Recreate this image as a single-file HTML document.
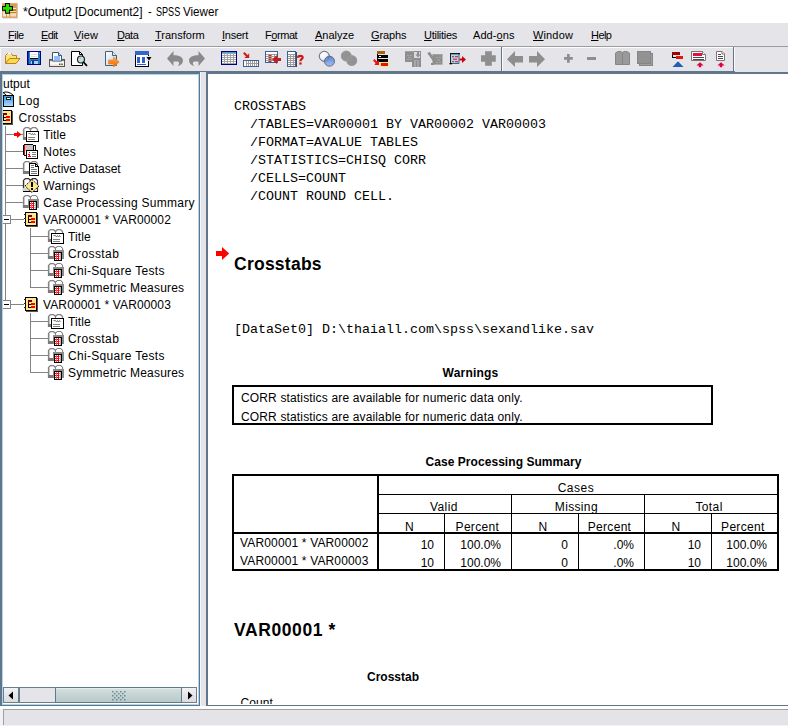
<!DOCTYPE html>
<html>
<head>
<meta charset="utf-8">
<title>*Output2 [Document2] - SPSS Viewer</title>
<style>
html,body{margin:0;padding:0;}
body{width:788px;height:726px;overflow:hidden;position:relative;background:#e4e4e9;font-family:"Liberation Sans",sans-serif;color:#000;}
.abs{position:absolute;}
#titlebar{left:0;top:0;width:788px;height:23px;background:#fff;}
#titletext{left:22px;top:4px;font-size:12px;line-height:16px;white-space:nowrap;}
#menubar{left:0;top:23px;width:788px;height:23px;background:#e4e4e9;}
.mi{position:absolute;top:5px;font-size:11px;line-height:14px;white-space:nowrap;color:#000;}
.mi u{text-decoration:underline;}
#tbline{left:0;top:46px;width:788px;height:1px;background:#9c9c9c;}
#tbline2{left:0;top:47px;width:733px;height:1px;background:#fff;}
#toolbar{left:0;top:48px;width:788px;height:23px;background:#e4e4e9;}
#band{left:0;top:71px;width:788px;height:635px;background:#62768b;}
#leftpane{left:2px;top:74px;width:195px;height:629px;background:#fff;border:1px solid #a9d7ef;overflow:hidden;}
#divider{left:200px;top:72px;width:6px;height:634px;background:#e4e4e9;}
#rightpane{left:208px;top:74px;width:580px;height:631px;background:#fff;overflow:hidden;}
#gap{left:0;top:706px;width:788px;height:3px;background:#fefeff;}
#status{left:0;top:709px;width:788px;height:17px;background:#e3e3e8;}
.tr{position:absolute;left:0;height:17px;line-height:17px;font-size:12px;white-space:nowrap;}
.tl{position:absolute;background:#808080;}
.mono{font-family:"Liberation Mono",monospace;font-size:13.33px;line-height:18px;white-space:pre;position:absolute;}
.h1{position:absolute;font-weight:bold;font-size:17.5px;line-height:20px;white-space:nowrap;}
.tt{position:absolute;font-weight:bold;font-size:12px;line-height:14px;white-space:nowrap;text-align:center;}
.c{position:absolute;font-size:12px;line-height:14px;white-space:nowrap;}
.ln{position:absolute;background:#000;}
svg{position:absolute;overflow:visible;}
</style>
</head>
<body>
<div id="titlebar" class="abs"></div>
<svg style="left:0;top:0" width="22" height="22" viewBox="0 0 22 22">
<rect x="3" y="4" width="15" height="15" fill="#dfe4ec"/>
<rect x="2" y="3" width="15.300" height="15" fill="#d89c5c"/>
<rect x="2.500" y="3.500" width="14.300" height="14" fill="none" stroke="#e0ac70" stroke-width="1"/>
<rect x="3" y="11.500" width="3" height="5" fill="#f8e4d0"/><rect x="7" y="13.500" width="2" height="3" fill="#f8e4d0"/><rect x="10.300" y="13.200" width="5.700" height="3.300" fill="#f4dcc4"/>
<rect x="13" y="8" width="3" height="1" fill="#f8e8d8"/>
<rect x="10" y="9.200" width="6" height="1.600" fill="#b87c24"/>
<rect x="10" y="11" width="6" height="1" fill="#f4e48c"/>
<rect x="10" y="12" width="6" height="1" fill="#b87c24"/>
<path d="M5.100 3.100H9.900V6.100H12.900V10.700H9.900V13.700H5.100V10.700H2.100V6.100H5.100Z" fill="#000"/>
<path d="M6 4H9V7H12V9.800H9V12.800H6V9.800H3V7H6Z" fill="#22e000"/>
</svg>
<div id="titletext" class="abs"><span style="position:absolute;left:0.5px;top:0;display:inline-block;transform-origin:0 0;transform:scaleX(1.034)">*Output2</span> <span style="position:absolute;left:53.0px;top:0;display:inline-block;transform-origin:0 0;transform:scaleX(0.992)">[Document2]</span> <span style="position:absolute;left:126.1px;top:0;display:inline-block;transform-origin:0 0;transform:scaleX(0.900)">-</span> <span style="position:absolute;left:133.5px;top:0;display:inline-block;transform-origin:0 0;transform:scaleX(0.756)">SPSS</span> <span style="position:absolute;left:161.2px;top:0;display:inline-block;transform-origin:0 0;transform:scaleX(0.968)">Viewer</span></div>
<div id="menubar" class="abs">
<span class="mi" style="left:8px;letter-spacing:-0.5px"><u>F</u>ile</span>
<span class="mi" style="left:41px;letter-spacing:-0.6px"><u>E</u>dit</span>
<span class="mi" style="left:74px;letter-spacing:0.1px"><u>V</u>iew</span>
<span class="mi" style="left:117px;letter-spacing:-0.5px"><u>D</u>ata</span>
<span class="mi" style="left:155px"><u>T</u>ransform</span>
<span class="mi" style="left:222px;letter-spacing:-0.25px"><u>I</u>nsert</span>
<span class="mi" style="left:265px;letter-spacing:-0.45px">F<u>o</u>rmat</span>
<span class="mi" style="left:315px"><u>A</u>nalyze</span>
<span class="mi" style="left:371px;letter-spacing:-0.1px"><u>G</u>raphs</span>
<span class="mi" style="left:424px;letter-spacing:-0.27px"><u>U</u>tilities</span>
<span class="mi" style="left:473px;letter-spacing:0.08px">Add-<u>o</u>ns</span>
<span class="mi" style="left:533px;letter-spacing:0.14px"><u>W</u>indow</span>
<span class="mi" style="left:591px;letter-spacing:-0.55px"><u>H</u>elp</span>
</div>
<div id="tbline" class="abs"></div>
<div id="tbline2" class="abs"></div>
<div id="toolbar" class="abs">
<!--TB_START-->
<svg style="left:0;top:0" width="788" height="23" viewBox="0 48 788 23">
<defs>
<linearGradient id="gFold" x1="0" y1="0" x2="0" y2="1"><stop offset="0" stop-color="#f4e894"/><stop offset="1" stop-color="#f0dc40"/></linearGradient>
<linearGradient id="gPr" x1="0" y1="0" x2="0" y2="1"><stop offset="0" stop-color="#c8c4c0"/><stop offset="0.5" stop-color="#ffffff"/><stop offset="1" stop-color="#dcd8d4"/></linearGradient>
<linearGradient id="gExp" x1="0" y1="0" x2="1" y2="1"><stop offset="0" stop-color="#ffffff"/><stop offset="1" stop-color="#b8d0ec"/></linearGradient>
<linearGradient id="gOr" x1="0" y1="0" x2="0" y2="1"><stop offset="0" stop-color="#ffb040"/><stop offset="1" stop-color="#f06010"/></linearGradient>
<radialGradient id="gC1" cx="0.4" cy="0.35" r="0.7"><stop offset="0" stop-color="#ffffff"/><stop offset="1" stop-color="#dde4f4"/></radialGradient>
<linearGradient id="gC2" x1="0" y1="0" x2="0" y2="1"><stop offset="0" stop-color="#5a84dc"/><stop offset="1" stop-color="#a4c0f0"/></linearGradient>
</defs>
<!-- open folder -->
<g>
<path d="M5.5 63.5V55.5L7.5 53.5H11.5L12.5 55.5H16.5V58" fill="url(#gFold)" stroke="#c47a30"/>
<path d="M8 53.5H11" stroke="#fff" stroke-width="1"/>
<path d="M5.5 63.5L9.5 58.5H20L16 63.5Z" fill="#f4e040" stroke="#c47a30"/>
</g>
<!-- save -->
<g shape-rendering="crispEdges">
<rect x="27.5" y="51.5" width="13" height="13" fill="#2c7cc4" stroke="#000088"/>
<rect x="28" y="52" width="1" height="12" fill="#1040a0"/>
<rect x="30" y="52" width="8" height="6" fill="#fff"/>
<rect x="31" y="54" width="6" height="1" fill="#dcdcdc"/><rect x="31" y="56" width="6" height="1" fill="#dcdcdc"/>
<rect x="30" y="58" width="8" height="1" fill="#000"/>
<rect x="31" y="61" width="7" height="3" fill="#a8d0f4"/>
<rect x="31" y="60" width="7" height="1" fill="#104898"/>
<rect x="32" y="61" width="2" height="3" fill="#0c3c90"/>
<rect x="39" y="53" width="1" height="1" fill="#80b8e8"/>
</g>
<!-- print -->
<g>
<rect x="49.5" y="59.5" width="15" height="7" fill="url(#gPr)" stroke="#5c5250"/>
<rect x="50" y="60" width="14" height="1" fill="#8c8480"/>
<rect x="59" y="63.5" width="1.5" height="1.5" fill="#f01010"/><rect x="61" y="63.5" width="2" height="1.5" fill="#30b030"/>
<path d="M52.5 61V52.5H58.5L61.5 55.5V61Z" fill="#fff" stroke="#2c5c7c"/>
<path d="M58.5 52.5V55.5H61.5" fill="#c8dce8" stroke="#2c5c7c"/>
<rect x="54" y="56.5" width="6" height="1" fill="#3070ff"/><rect x="54" y="58.5" width="6" height="1" fill="#3070ff"/>
</g>
<!-- preview -->
<g>
<path d="M71.500 51.500H79.500L82.500 54.500V65.500H71.500Z" fill="#fff" stroke="#000"/>
<path d="M79.500 51.500V54.500H82.500" fill="none" stroke="#000"/>
<circle cx="81" cy="59.500" r="3.500" fill="#d4dcdc" stroke="#202020" stroke-width="1.200"/>
<rect x="79.500" y="57.500" width="1.500" height="1.500" fill="#30e8e8"/><rect x="81.500" y="60.500" width="1.200" height="1.200" fill="#30e8e8"/>
<path d="M83.800 62.500L86.500 65.300" stroke="#000" stroke-width="1.800" stroke-linecap="round"/>
</g>
<!-- export -->
<g>
<path d="M105.500 51.500H112.500L116.500 55.500V65.500H105.500Z" fill="url(#gExp)" stroke="#3c6478"/>
<path d="M112.500 51.500V55.500H116.500" fill="#e8f0f8" stroke="#3c6478"/>
<path d="M108.500 60H113.500V57L119.200 62L113.500 67V64H108.500Z" fill="url(#gOr)" stroke="#f08020" stroke-width="0.600"/>
</g>
<!-- dialog recall -->
<g shape-rendering="crispEdges">
<rect x="135.500" y="54.500" width="13" height="12" fill="#fff" stroke="#000"/>
<rect x="135" y="51" width="14" height="4" fill="#3464d0"/>
<rect x="137" y="57" width="3" height="6" fill="#3060d8"/><rect x="142" y="57" width="3" height="6" fill="#3060d8"/>
<rect x="137" y="64" width="9" height="1" fill="#3060d8"/>
<rect x="146" y="56" width="6" height="5" fill="#e4e4e9"/>
<path d="M146.500 57H151.500L149 60.500Z" fill="#000" shape-rendering="auto"/>
</g>
<!-- undo / redo -->
<path d="M167 58.500L173.500 51V55.200C179 55.200 183 57 183 60.500C183 63.500 181 65.200 177.800 66C179.600 64.200 179.600 62 177.500 61.600H173.500V66Z" fill="#8a8a8a"/>
<path d="M205 58.500L198.500 51V55.200C193 55.200 189 57 189 60.500C189 63.500 191 65.200 194.200 66C192.400 64.200 192.400 62 194.500 61.600H198.500V66Z" fill="#8a8a8a"/>
<!-- data grid -->
<g shape-rendering="crispEdges">
<rect x="221.500" y="51.500" width="15" height="13" fill="#a4a4a4" stroke="#000080"/>
<rect x="222" y="52" width="14" height="1" fill="#3ca0e4"/>
<g fill="#fff">
<rect x="222" y="54" width="2" height="1"/><rect x="225" y="54" width="2" height="1"/><rect x="228" y="54" width="2" height="1"/><rect x="231" y="54" width="2" height="1"/><rect x="234" y="54" width="2" height="1"/>
<rect x="222" y="56" width="2" height="1"/><rect x="225" y="56" width="2" height="1"/><rect x="228" y="56" width="2" height="1"/><rect x="231" y="56" width="2" height="1"/><rect x="234" y="56" width="2" height="1"/>
<rect x="222" y="58" width="2" height="1"/><rect x="225" y="58" width="2" height="1"/><rect x="228" y="58" width="2" height="1"/><rect x="231" y="58" width="2" height="1"/><rect x="234" y="58" width="2" height="1"/>
<rect x="222" y="60" width="2" height="1"/><rect x="225" y="60" width="2" height="1"/><rect x="228" y="60" width="2" height="1"/><rect x="231" y="60" width="2" height="1"/><rect x="234" y="60" width="2" height="1"/>
<rect x="222" y="62" width="2" height="1"/><rect x="225" y="62" width="2" height="1"/><rect x="228" y="62" width="2" height="1"/><rect x="231" y="62" width="2" height="1"/><rect x="234" y="62" width="2" height="1"/>
</g>
</g>
<!-- goto case -->
<g>
<path d="M249.200 58V53.300L247.600 54.900L244.600 52L243 53.600L246 56.500L244.300 58Z" fill="#d02020"/>
<g shape-rendering="crispEdges">
<rect x="243.500" y="60.500" width="15" height="6" fill="#a09c9c" stroke="#3a6294"/>
<rect x="244" y="61" width="2" height="5" fill="#fff"/>
<g fill="#fff">
<rect x="247" y="61" width="1" height="2"/><rect x="249" y="61" width="1" height="2"/><rect x="251" y="61" width="1" height="2"/><rect x="253" y="61" width="1" height="2"/><rect x="255" y="61" width="1" height="2"/><rect x="257" y="61" width="1" height="2"/>
<rect x="247" y="64" width="1" height="2"/><rect x="249" y="64" width="1" height="2"/><rect x="251" y="64" width="1" height="2"/><rect x="253" y="64" width="1" height="2"/><rect x="255" y="64" width="1" height="2"/><rect x="257" y="64" width="1" height="2"/>
</g>
</g>
</g>
<!-- insert variable -->
<g>
<g shape-rendering="crispEdges">
<rect x="265.500" y="51.500" width="12" height="11" fill="#a09c9c" stroke="#3a6294"/>
<rect x="266" y="52" width="11" height="2" fill="#fff"/>
<g fill="#fff">
<rect x="266" y="55" width="2" height="1"/><rect x="272" y="55" width="2" height="1"/><rect x="275" y="55" width="2" height="1"/>
<rect x="266" y="57" width="2" height="1"/><rect x="272" y="57" width="2" height="1"/><rect x="275" y="57" width="2" height="1"/>
<rect x="266" y="59" width="2" height="1"/><rect x="272" y="59" width="2" height="1"/><rect x="275" y="59" width="2" height="1"/>
<rect x="266" y="61" width="2" height="1"/><rect x="272" y="61" width="2" height="1"/><rect x="275" y="61" width="2" height="1"/>
</g>
<g fill="#d81818">
<rect x="269" y="55" width="2" height="1"/><rect x="269" y="57" width="2" height="1"/><rect x="269" y="59" width="2" height="1"/><rect x="269" y="61" width="2" height="1"/>
</g>
</g>
<path d="M272 59.500L277 55V58H281V61H277V64Z" fill="#d01818"/>
</g>
<!-- variables ? -->
<g>
<g shape-rendering="crispEdges">
<rect x="296" y="52" width="1" height="15" fill="#404850"/>
<rect x="287.500" y="51.500" width="8" height="15" fill="#a09c9c" stroke="#3a6294"/>
<rect x="288" y="52" width="7" height="2" fill="#fff"/>
<g fill="#fff">
<rect x="288" y="55" width="2" height="1"/><rect x="291" y="55" width="2" height="1"/><rect x="294" y="55" width="1" height="1"/>
<rect x="288" y="57" width="2" height="1"/><rect x="291" y="57" width="2" height="1"/><rect x="294" y="57" width="1" height="1"/>
<rect x="288" y="59" width="2" height="1"/><rect x="291" y="59" width="2" height="1"/><rect x="294" y="59" width="1" height="1"/>
<rect x="288" y="61" width="2" height="1"/><rect x="291" y="61" width="2" height="1"/><rect x="294" y="61" width="1" height="1"/>
<rect x="288" y="63" width="2" height="1"/><rect x="291" y="63" width="2" height="1"/><rect x="294" y="63" width="1" height="1"/>
<rect x="288" y="65" width="2" height="1"/><rect x="291" y="65" width="2" height="1"/><rect x="294" y="65" width="1" height="1"/>
</g>
</g>
<path d="M298 57.700C298 55.200 302.700 55.200 302.700 57.500C302.700 59.200 300.400 59.200 300.400 61.200" fill="none" stroke="#d01818" stroke-width="2.200"/>
<rect x="299.300" y="62.400" width="2.300" height="2.200" fill="#d01818"/>
</g>
<!-- circles -->
<circle cx="324.300" cy="56.300" r="5" fill="url(#gC1)" stroke="#7c8088" stroke-width="0.900"/>
<circle cx="329.500" cy="61.200" r="5" fill="url(#gC2)" stroke="#5c6470" stroke-width="0.900"/>
<circle cx="324.300" cy="56.300" r="5" fill="none" stroke="#6c7480" stroke-width="0.800"/>
<circle cx="346.300" cy="56" r="5.300" fill="#929292"/>
<circle cx="351.800" cy="60.600" r="5.300" fill="#929292"/>
<circle cx="346.300" cy="56" r="5" fill="none" stroke="#9e9e9e" stroke-width="0.700"/>
<circle cx="351.800" cy="60.600" r="5" fill="none" stroke="#9e9e9e" stroke-width="0.700"/>
<!-- designate window -->
<g shape-rendering="crispEdges">
<rect x="377" y="51" width="8" height="3" fill="#a4640c"/>
<rect x="377" y="54" width="1" height="8" fill="#000"/>
<rect x="378" y="55" width="10" height="3" fill="#000"/>
<rect x="379" y="56" width="2" height="1" fill="#fff"/>
<rect x="378" y="59" width="10" height="3" fill="#000"/>
<rect x="380" y="62" width="9" height="5" fill="#ffe870"/>
<rect x="381" y="63" width="7" height="3" fill="#e81010"/>
<path d="M373 60.500L374.500 59L377 61.500L379 60.500V65H374.500L375.500 63Z" fill="#f01010" shape-rendering="auto"/>
</g>
<!-- gray icon 1 -->
<g shape-rendering="crispEdges">
<rect x="405" y="51" width="9" height="11" fill="#8e8e8e"/>
<rect x="405" y="51" width="9" height="1" fill="#a2a2a2"/>
<rect x="407" y="55" width="2" height="1" fill="#a8a8a8"/><rect x="410" y="55" width="2" height="1" fill="#a8a8a8"/>
<rect x="408" y="57" width="3" height="1" fill="#a8a8a8"/>
<rect x="407" y="59" width="2" height="1" fill="#a8a8a8"/><rect x="410" y="59" width="2" height="1" fill="#a8a8a8"/>
<rect x="414" y="51" width="7" height="1" fill="#8e8e8e"/><rect x="420" y="51" width="1" height="8" fill="#8e8e8e"/>
<rect x="414" y="52" width="6" height="6" fill="#dcdce0"/>
<rect x="417" y="52" width="2" height="3" fill="#8e8e8e"/>
<path d="M415.500 54.500H420.500L418 57.500Z" fill="#8e8e8e" shape-rendering="auto"/>
<rect x="412" y="58" width="9" height="9" fill="#8e8e8e"/>
<rect x="414" y="61" width="2" height="6" fill="#a6a6a6"/><rect x="417" y="61" width="2" height="6" fill="#a6a6a6"/>
<rect x="414" y="60" width="5" height="1" fill="#a6a6a6"/>
</g>
<!-- gray icon 2 -->
<g>
<path d="M428.500 52.500L433.800 60" stroke="#8e8e8e" stroke-width="2.800" fill="none"/>
<rect x="432.500" y="54" width="10" height="10.600" fill="#8e8e8e"/>
<rect x="432.500" y="54" width="10" height="1" fill="#a2a2a2"/>
<rect x="431" y="63" width="3" height="2" fill="#8e8e8e"/>
<rect x="436" y="57" width="2" height="1" fill="#a8a8a8"/><rect x="439" y="57" width="2" height="1" fill="#a8a8a8"/>
<rect x="437" y="59.500" width="3" height="1" fill="#a8a8a8"/>
<rect x="436" y="62" width="2" height="1" fill="#a8a8a8"/><rect x="439" y="62" width="2" height="1" fill="#a8a8a8"/>
</g>
<!-- script run -->
<g>
<path d="M450.500 53.500H459V63.500H450.500Z" fill="#a8d8f0" stroke="#48607c" stroke-width="1"/>
<rect x="450" y="53" width="1" height="11" fill="#182430"/>
<rect x="450" y="53" width="10" height="1.300" fill="#101820"/>
<rect x="449.500" y="63" width="2.500" height="1.300" fill="#000"/>
<rect x="452" y="56.200" width="2" height="1" fill="#e01020"/><rect x="455" y="56.200" width="3" height="1" fill="#e01020"/>
<rect x="453" y="58.700" width="4" height="1" fill="#e01020"/>
<rect x="452" y="61.200" width="2" height="1" fill="#e01020"/><rect x="455" y="61.200" width="3" height="1" fill="#e01020"/>
<path d="M459.500 58.500H462V56L466 59.500L462 63V60.500H459.500Z" fill="#d00010"/>
</g>
<!-- plus gray -->
<path d="M485.100 51.300H491.800V55.300H495.800V61.800H491.800V65.800H485.100V61.800H481V55.300H485.100Z" fill="#8e8e8e"/>
<!-- separator -->
<rect x="501" y="47" width="1" height="24" fill="#62768b"/><rect x="502" y="47" width="1" height="24" fill="#fcfcfe"/>
<!-- nav arrows -->
<path d="M507 59.200L515 51V56H523V62.600H515V67Z" fill="#8e8e8e"/>
<path d="M545 59.200L537 51V56H529V62.600H537V67Z" fill="#8e8e8e"/>
<!-- small plus / minus -->
<path d="M567 54H569.700V57H572.800V59.800H569.700V62.700H567V59.800H564V57H567Z" fill="#8e8e8e"/>
<rect x="587" y="57" width="9" height="3" fill="#8e8e8e"/>
<!-- open book gray -->
<path d="M615.500 64.500V53C617.500 51 621 51 622.500 52.500C624 51 627.500 51 629.500 53V64.500Z" fill="#9a9a9a" stroke="#868686"/>
<path d="M622.500 52.500V64" stroke="#868686" stroke-width="1"/>
<!-- closed book gray -->
<g shape-rendering="crispEdges">
<rect x="639.500" y="53.500" width="13" height="12" fill="#a0a0a0" stroke="#868686"/>
<rect x="637.500" y="51.500" width="13" height="12" fill="#929292" stroke="#868686"/>
</g>
<!-- icon A -->
<g shape-rendering="crispEdges">
<rect x="672" y="52" width="8" height="3" fill="#a00000"/>
<rect x="672" y="55" width="1" height="3" fill="#000"/><rect x="672" y="57" width="4" height="1" fill="#000"/>
<rect x="676" y="56" width="7" height="3" fill="#e41414"/>
<rect x="677" y="60" width="2" height="1" fill="#fff"/>
<path d="M678 61.300L683.500 67H672.500Z" fill="#2060b4" shape-rendering="auto"/>
</g>
<!-- icon B -->
<g>
<path d="M691.500 51.500H702.500L705.500 54.500V60.500H691.500Z" fill="#fff" stroke="#7c7474"/>
<path d="M702.500 51.500V54.500H705.500" fill="#fff" stroke="#7c7474"/>
<rect x="693" y="53" width="9" height="3" fill="#e41040"/>
<rect x="693" y="57" width="11" height="1" fill="#504848"/><rect x="693" y="59" width="11" height="1" fill="#504848"/>
<path d="M700 62.200L703.600 65.400H701.200V67.200H698.800V65.400H696.400Z" fill="#e00040"/>
</g>
<!-- icon C -->
<g>
<path d="M716.500 51.500H722L724.500 54V60.500H716.500Z" fill="#fff" stroke="#7c7474"/>
<path d="M722 51.500V54H724.500" fill="#fff" stroke="#7c7474"/>
<rect x="718" y="54" width="3" height="1" fill="#504848"/><rect x="718" y="56" width="5" height="1" fill="#504848"/><rect x="718" y="58" width="5" height="1" fill="#504848"/>
<path d="M721 62.200L724.600 65.400H722.200V67.200H719.800V65.400H717.400Z" fill="#e00040"/>
</g>
<!-- right separator -->
<rect x="733" y="47" width="1" height="25" fill="#62768b"/><rect x="734" y="47" width="1" height="25" fill="#fcfcfe"/><rect x="735" y="71" width="53" height="1" fill="#e4e4e9"/>
</svg>

<!--TB_END-->
</div>
<div class="abs" style="left:0;top:47px;width:1px;height:24px;background:#f6f6f8"></div>
<div id="band" class="abs"></div>
<div class="abs" style="left:735px;top:71px;width:53px;height:1px;background:#e4e4e9"></div>
<div id="divider" class="abs"></div>
<div id="leftpane" class="abs">
<!--TREE_START-->
<div class="tr" style="left:-9.3px;top:1px;">Output</div>
<svg style="left:-3px;top:17px" width="16" height="16" viewBox="0 0 16 16" shape-rendering="crispEdges"><defs><linearGradient id="lg" x1="0" y1="0" x2="0" y2="1"><stop offset="0" stop-color="#2f97e0"/><stop offset="1" stop-color="#b4defa"/></linearGradient></defs><path d="M2 1Q8 -2 13.5 3.5" fill="none" stroke="#000" shape-rendering="auto"/><path d="M3 0.5L6 3" fill="none" stroke="#000" shape-rendering="auto"/><rect x="3.5" y="3.5" width="10" height="11" fill="url(#lg)" stroke="#000"/><rect x="6.5" y="5.5" width="4" height="2" fill="#fff" stroke="#222"/></svg>
<div class="tr" style="left:15.5px;top:18px;letter-spacing:0.5px;">Log</div>
<svg style="left:-4px;top:35px" width="16" height="16" viewBox="0 0 16 16" shape-rendering="crispEdges"><rect x="2" y="1" width="12" height="14" fill="#555"/><rect x="1.5" y="0.5" width="11" height="13" fill="#ffe88c" stroke="#000"/><rect x="0" y="2" width="2" height="1" fill="#222"/><rect x="0" y="6" width="2" height="1" fill="#222"/><rect x="0" y="10" width="2" height="1" fill="#222"/><rect x="4" y="3" width="4" height="2" fill="#800000"/><rect x="7" y="6" width="4" height="2" fill="#f00"/><rect x="7" y="9" width="4" height="2" fill="#f00"/><path d="M4.5 5V10.5H7M4.5 7.5H7" fill="none" stroke="#000"/></svg>
<div class="tr" style="left:15.5px;top:35px;letter-spacing:0.45px;">Crosstabs</div>
<div class="tl" style="left:2px;top:51px;width:1px;height:179px;background:#848484"></div>
<div class="tl" style="left:2px;top:59px;width:18px;height:1px;background:#848484"></div>
<svg style="left:20px;top:52px" width="16" height="16" viewBox="0 0 16 16" shape-rendering="crispEdges"><path d="M0.5 13V2.5L1.5 1.5L2.5 0.5H5.5L6.5 1.5L7.5 2.5L8.5 1.5L9.5 0.5H12.5L13.5 1.5L14.5 2.5V13" fill="#fff" stroke="#848484" stroke-width="1.25" shape-rendering="auto"/><rect x="7" y="2" width="1" height="3" fill="#848484"/><rect x="1" y="2" width="1" height="8" fill="#c8c8c8"/><rect x="0" y="10" width="6" height="3" fill="#7a7a7a"/><rect x="3.5" y="4.5" width="12" height="10" fill="#fff" stroke="#000"/><rect x="3" y="14" width="13" height="1" fill="#000"/><rect x="15" y="4" width="1" height="11" fill="#000"/><path d="M5.5 6.5H7.5L8.5 8L9.5 6.5L10.5 8L11.5 6.5L12.5 8" fill="none" stroke="#777" shape-rendering="auto"/><rect x="5" y="10" width="7" height="1" fill="#808080"/><rect x="5" y="12" width="7" height="1" fill="#808080"/></svg>
<div class="tr" style="left:40.3px;top:52px;letter-spacing:0.1px;">Title</div>
<div class="tl" style="left:2px;top:76px;width:18px;height:1px;background:#848484"></div>
<svg style="left:20px;top:69px" width="16" height="16" viewBox="0 0 16 16" shape-rendering="crispEdges"><path d="M1.5 0.5H9.5L10.5 1.5H12.5V11.5H1.5L0.5 10.5V1.5Z" fill="#fff" stroke="#000"/><rect x="2" y="1" width="8" height="6" fill="#c9c3c3"/><rect x="1" y="1" width="1" height="10" fill="#f00"/><rect x="10" y="2" width="1" height="5" fill="#000"/><rect x="3.5" y="6.5" width="11" height="8" fill="#fff" stroke="#000"/><rect x="6" y="8" width="1" height="1" fill="#f00"/><rect x="5" y="10" width="2" height="1" fill="#f00"/><rect x="6" y="10" width="1" height="3" fill="#f00"/><rect x="5" y="12" width="3" height="1" fill="#f00"/><rect x="9" y="8" width="4" height="1" fill="#808080"/><rect x="9" y="10" width="4" height="1" fill="#808080"/><rect x="9" y="12" width="4" height="1" fill="#808080"/></svg>
<div class="tr" style="left:40.3px;top:69px;letter-spacing:0.3px;">Notes</div>
<div class="tl" style="left:2px;top:93px;width:18px;height:1px;background:#848484"></div>
<svg style="left:20px;top:86px" width="16" height="16" viewBox="0 0 16 16" shape-rendering="crispEdges"><path d="M0.5 13V2.5L1.5 1.5L2.5 0.5H5.5L6.5 1.5L7.5 2.5L8.5 1.5L9.5 0.5H12.5L13.5 1.5L14.5 2.5V13" fill="#fff" stroke="#848484" stroke-width="1.25" shape-rendering="auto"/><rect x="7" y="2" width="1" height="3" fill="#848484"/><rect x="1" y="2" width="1" height="8" fill="#c8c8c8"/><rect x="0" y="10" width="6" height="3" fill="#7a7a7a"/><path d="M6.5 2.5H12.5L15.5 5.5V14.5H6.5Z" fill="#fff" stroke="#000"/><path d="M12.5 2.5V5.5H15.5" fill="none" stroke="#000"/><rect x="6" y="14" width="10" height="1" fill="#000"/><rect x="8" y="4" width="3" height="1" fill="#707070"/><rect x="8" y="6" width="3" height="1" fill="#707070"/><rect x="8" y="8" width="6" height="1" fill="#707070"/><rect x="8" y="10" width="6" height="1" fill="#707070"/><rect x="8" y="12" width="6" height="1" fill="#707070"/></svg>
<div class="tr" style="left:40.3px;top:86px;">Active Dataset</div>
<div class="tl" style="left:2px;top:110px;width:18px;height:1px;background:#848484"></div>
<svg style="left:20px;top:103px" width="16" height="16" viewBox="0 0 16 16" shape-rendering="crispEdges"><path d="M0.5 13V2.5L1.5 1.5L2.5 0.5H5.5L6.5 1.5L7.5 2.5L8.5 1.5L9.5 0.5H12.5L13.5 1.5L14.5 2.5V13" fill="#fff" stroke="#333" stroke-width="1.25" shape-rendering="auto"/><rect x="7" y="2" width="1" height="3" fill="#333"/><rect x="1" y="2" width="1" height="8" fill="#c8c8c8"/><rect x="0" y="10" width="6" height="3" fill="#d4d4d4"/><rect x="0" y="13" width="15" height="1" fill="#000"/><path d="M9 1.5L16 8L9 14.5L2 8Z" fill="#ffe88c" stroke="#000" stroke-dasharray="1.4 1" shape-rendering="auto"/><rect x="8" y="4" width="2" height="5" fill="#000"/><rect x="8" y="10" width="2" height="2" fill="#000"/></svg>
<div class="tr" style="left:40.3px;top:103px;letter-spacing:0.25px;">Warnings</div>
<div class="tl" style="left:2px;top:127px;width:18px;height:1px;background:#848484"></div>
<svg style="left:20px;top:120px" width="16" height="16" viewBox="0 0 16 16" shape-rendering="crispEdges"><path d="M0.5 13V2.5L1.5 1.5L2.5 0.5H5.5L6.5 1.5L7.5 2.5L8.5 1.5L9.5 0.5H12.5L13.5 1.5L14.5 2.5V13" fill="#fff" stroke="#848484" stroke-width="1.25" shape-rendering="auto"/><rect x="7" y="2" width="1" height="3" fill="#848484"/><rect x="1" y="2" width="1" height="8" fill="#c8c8c8"/><rect x="0" y="10" width="6" height="3" fill="#7a7a7a"/><rect x="5" y="4" width="11" height="9" fill="#8c8c8c"/><path d="M8 2.5L9.5 1H12.5L14 2.5V4H8Z" fill="#fff"/><rect x="6.5" y="6.5" width="7" height="8" fill="#fff" stroke="#000"/><rect x="7" y="8" width="3" height="1" fill="#f00"/><rect x="7" y="10" width="3" height="1" fill="#f00"/><rect x="7" y="12" width="3" height="1" fill="#f00"/><rect x="10" y="7" width="1" height="7" fill="#f00"/><rect x="8" y="7" width="1" height="7" fill="#f55"/><rect x="11" y="8" width="2" height="1" fill="#9ab"/><rect x="11" y="10" width="2" height="1" fill="#9ab"/><rect x="11" y="12" width="2" height="1" fill="#9ab"/><rect x="12" y="7" width="1" height="7" fill="#abc"/></svg>
<div class="tr" style="left:40.3px;top:120px;letter-spacing:0.26px;">Case Processing Summary</div>
<svg style="left:11px;top:56px" width="8" height="7" viewBox="0 0 8 7"><path d="M0 2H3V0L7.5 3.5L3 7V5H0Z" fill="#f00"/></svg>
<div class="abs" style="left:-1px;top:140px;width:7px;height:7px;border:1px solid #848484;background:#fff"></div>
<div class="tl" style="left:1px;top:144px;width:5px;height:1px;background:#000"></div>
<div class="tl" style="left:8px;top:144px;width:13px;height:1px;background:#848484"></div>
<svg style="left:21px;top:137px" width="16" height="16" viewBox="0 0 16 16" shape-rendering="crispEdges"><rect x="2" y="1" width="12" height="14" fill="#555"/><rect x="1.5" y="0.5" width="11" height="13" fill="#ffe88c" stroke="#000"/><rect x="0" y="2" width="2" height="1" fill="#222"/><rect x="0" y="6" width="2" height="1" fill="#222"/><rect x="0" y="10" width="2" height="1" fill="#222"/><rect x="4" y="3" width="4" height="2" fill="#800000"/><rect x="7" y="6" width="4" height="2" fill="#f00"/><rect x="7" y="9" width="4" height="2" fill="#f00"/><path d="M4.5 5V10.5H7M4.5 7.5H7" fill="none" stroke="#000"/></svg>
<div class="tr" style="left:40px;top:137px;letter-spacing:0.12px;">VAR00001 * VAR00002</div>
<div class="tl" style="left:27px;top:153px;width:1px;height:60px;background:#848484"></div>
<div class="tl" style="left:27px;top:161px;width:18px;height:1px;background:#848484"></div>
<svg style="left:45px;top:154px" width="16" height="16" viewBox="0 0 16 16" shape-rendering="crispEdges"><path d="M0.5 13V2.5L1.5 1.5L2.5 0.5H5.5L6.5 1.5L7.5 2.5L8.5 1.5L9.5 0.5H12.5L13.5 1.5L14.5 2.5V13" fill="#fff" stroke="#848484" stroke-width="1.25" shape-rendering="auto"/><rect x="7" y="2" width="1" height="3" fill="#848484"/><rect x="1" y="2" width="1" height="8" fill="#c8c8c8"/><rect x="0" y="10" width="6" height="3" fill="#7a7a7a"/><rect x="3.5" y="4.5" width="12" height="10" fill="#fff" stroke="#000"/><rect x="3" y="14" width="13" height="1" fill="#000"/><rect x="15" y="4" width="1" height="11" fill="#000"/><path d="M5.5 6.5H7.5L8.5 8L9.5 6.5L10.5 8L11.5 6.5L12.5 8" fill="none" stroke="#777" shape-rendering="auto"/><rect x="5" y="10" width="7" height="1" fill="#808080"/><rect x="5" y="12" width="7" height="1" fill="#808080"/></svg>
<div class="tr" style="left:65px;top:154px;letter-spacing:0.1px;">Title</div>
<div class="tl" style="left:27px;top:178px;width:18px;height:1px;background:#848484"></div>
<svg style="left:45px;top:171px" width="16" height="16" viewBox="0 0 16 16" shape-rendering="crispEdges"><path d="M0.5 13V2.5L1.5 1.5L2.5 0.5H5.5L6.5 1.5L7.5 2.5L8.5 1.5L9.5 0.5H12.5L13.5 1.5L14.5 2.5V13" fill="#fff" stroke="#848484" stroke-width="1.25" shape-rendering="auto"/><rect x="7" y="2" width="1" height="3" fill="#848484"/><rect x="1" y="2" width="1" height="8" fill="#c8c8c8"/><rect x="0" y="10" width="6" height="3" fill="#7a7a7a"/><rect x="5" y="4" width="11" height="9" fill="#8c8c8c"/><path d="M8 2.5L9.5 1H12.5L14 2.5V4H8Z" fill="#fff"/><rect x="6.5" y="6.5" width="7" height="8" fill="#fff" stroke="#000"/><rect x="7" y="8" width="3" height="1" fill="#f00"/><rect x="7" y="10" width="3" height="1" fill="#f00"/><rect x="7" y="12" width="3" height="1" fill="#f00"/><rect x="10" y="7" width="1" height="7" fill="#f00"/><rect x="8" y="7" width="1" height="7" fill="#f55"/><rect x="11" y="8" width="2" height="1" fill="#9ab"/><rect x="11" y="10" width="2" height="1" fill="#9ab"/><rect x="11" y="12" width="2" height="1" fill="#9ab"/><rect x="12" y="7" width="1" height="7" fill="#abc"/></svg>
<div class="tr" style="left:65px;top:171px;letter-spacing:0.4px;">Crosstab</div>
<div class="tl" style="left:27px;top:195px;width:18px;height:1px;background:#848484"></div>
<svg style="left:45px;top:188px" width="16" height="16" viewBox="0 0 16 16" shape-rendering="crispEdges"><path d="M0.5 13V2.5L1.5 1.5L2.5 0.5H5.5L6.5 1.5L7.5 2.5L8.5 1.5L9.5 0.5H12.5L13.5 1.5L14.5 2.5V13" fill="#fff" stroke="#848484" stroke-width="1.25" shape-rendering="auto"/><rect x="7" y="2" width="1" height="3" fill="#848484"/><rect x="1" y="2" width="1" height="8" fill="#c8c8c8"/><rect x="0" y="10" width="6" height="3" fill="#7a7a7a"/><rect x="5" y="4" width="11" height="9" fill="#8c8c8c"/><path d="M8 2.5L9.5 1H12.5L14 2.5V4H8Z" fill="#fff"/><rect x="6.5" y="6.5" width="7" height="8" fill="#fff" stroke="#000"/><rect x="7" y="8" width="3" height="1" fill="#f00"/><rect x="7" y="10" width="3" height="1" fill="#f00"/><rect x="7" y="12" width="3" height="1" fill="#f00"/><rect x="10" y="7" width="1" height="7" fill="#f00"/><rect x="8" y="7" width="1" height="7" fill="#f55"/><rect x="11" y="8" width="2" height="1" fill="#9ab"/><rect x="11" y="10" width="2" height="1" fill="#9ab"/><rect x="11" y="12" width="2" height="1" fill="#9ab"/><rect x="12" y="7" width="1" height="7" fill="#abc"/></svg>
<div class="tr" style="left:65px;top:188px;letter-spacing:0.31px;">Chi-Square Tests</div>
<div class="tl" style="left:27px;top:212px;width:18px;height:1px;background:#848484"></div>
<svg style="left:45px;top:205px" width="16" height="16" viewBox="0 0 16 16" shape-rendering="crispEdges"><path d="M0.5 13V2.5L1.5 1.5L2.5 0.5H5.5L6.5 1.5L7.5 2.5L8.5 1.5L9.5 0.5H12.5L13.5 1.5L14.5 2.5V13" fill="#fff" stroke="#848484" stroke-width="1.25" shape-rendering="auto"/><rect x="7" y="2" width="1" height="3" fill="#848484"/><rect x="1" y="2" width="1" height="8" fill="#c8c8c8"/><rect x="0" y="10" width="6" height="3" fill="#7a7a7a"/><rect x="5" y="4" width="11" height="9" fill="#8c8c8c"/><path d="M8 2.5L9.5 1H12.5L14 2.5V4H8Z" fill="#fff"/><rect x="6.5" y="6.5" width="7" height="8" fill="#fff" stroke="#000"/><rect x="7" y="8" width="3" height="1" fill="#f00"/><rect x="7" y="10" width="3" height="1" fill="#f00"/><rect x="7" y="12" width="3" height="1" fill="#f00"/><rect x="10" y="7" width="1" height="7" fill="#f00"/><rect x="8" y="7" width="1" height="7" fill="#f55"/><rect x="11" y="8" width="2" height="1" fill="#9ab"/><rect x="11" y="10" width="2" height="1" fill="#9ab"/><rect x="11" y="12" width="2" height="1" fill="#9ab"/><rect x="12" y="7" width="1" height="7" fill="#abc"/></svg>
<div class="tr" style="left:65px;top:205px;letter-spacing:0.2px;">Symmetric Measures</div>
<div class="abs" style="left:-1px;top:225px;width:7px;height:7px;border:1px solid #848484;background:#fff"></div>
<div class="tl" style="left:1px;top:229px;width:5px;height:1px;background:#000"></div>
<div class="tl" style="left:8px;top:229px;width:13px;height:1px;background:#848484"></div>
<svg style="left:21px;top:222px" width="16" height="16" viewBox="0 0 16 16" shape-rendering="crispEdges"><rect x="2" y="1" width="12" height="14" fill="#555"/><rect x="1.5" y="0.5" width="11" height="13" fill="#ffe88c" stroke="#000"/><rect x="0" y="2" width="2" height="1" fill="#222"/><rect x="0" y="6" width="2" height="1" fill="#222"/><rect x="0" y="10" width="2" height="1" fill="#222"/><rect x="4" y="3" width="4" height="2" fill="#800000"/><rect x="7" y="6" width="4" height="2" fill="#f00"/><rect x="7" y="9" width="4" height="2" fill="#f00"/><path d="M4.5 5V10.5H7M4.5 7.5H7" fill="none" stroke="#000"/></svg>
<div class="tr" style="left:40px;top:222px;letter-spacing:0.12px;">VAR00001 * VAR00003</div>
<div class="tl" style="left:27px;top:238px;width:1px;height:60px;background:#848484"></div>
<div class="tl" style="left:27px;top:246px;width:18px;height:1px;background:#848484"></div>
<svg style="left:45px;top:239px" width="16" height="16" viewBox="0 0 16 16" shape-rendering="crispEdges"><path d="M0.5 13V2.5L1.5 1.5L2.5 0.5H5.5L6.5 1.5L7.5 2.5L8.5 1.5L9.5 0.5H12.5L13.5 1.5L14.5 2.5V13" fill="#fff" stroke="#848484" stroke-width="1.25" shape-rendering="auto"/><rect x="7" y="2" width="1" height="3" fill="#848484"/><rect x="1" y="2" width="1" height="8" fill="#c8c8c8"/><rect x="0" y="10" width="6" height="3" fill="#7a7a7a"/><rect x="3.5" y="4.5" width="12" height="10" fill="#fff" stroke="#000"/><rect x="3" y="14" width="13" height="1" fill="#000"/><rect x="15" y="4" width="1" height="11" fill="#000"/><path d="M5.5 6.5H7.5L8.5 8L9.5 6.5L10.5 8L11.5 6.5L12.5 8" fill="none" stroke="#777" shape-rendering="auto"/><rect x="5" y="10" width="7" height="1" fill="#808080"/><rect x="5" y="12" width="7" height="1" fill="#808080"/></svg>
<div class="tr" style="left:65px;top:239px;letter-spacing:0.1px;">Title</div>
<div class="tl" style="left:27px;top:263px;width:18px;height:1px;background:#848484"></div>
<svg style="left:45px;top:256px" width="16" height="16" viewBox="0 0 16 16" shape-rendering="crispEdges"><path d="M0.5 13V2.5L1.5 1.5L2.5 0.5H5.5L6.5 1.5L7.5 2.5L8.5 1.5L9.5 0.5H12.5L13.5 1.5L14.5 2.5V13" fill="#fff" stroke="#848484" stroke-width="1.25" shape-rendering="auto"/><rect x="7" y="2" width="1" height="3" fill="#848484"/><rect x="1" y="2" width="1" height="8" fill="#c8c8c8"/><rect x="0" y="10" width="6" height="3" fill="#7a7a7a"/><rect x="5" y="4" width="11" height="9" fill="#8c8c8c"/><path d="M8 2.5L9.5 1H12.5L14 2.5V4H8Z" fill="#fff"/><rect x="6.5" y="6.5" width="7" height="8" fill="#fff" stroke="#000"/><rect x="7" y="8" width="3" height="1" fill="#f00"/><rect x="7" y="10" width="3" height="1" fill="#f00"/><rect x="7" y="12" width="3" height="1" fill="#f00"/><rect x="10" y="7" width="1" height="7" fill="#f00"/><rect x="8" y="7" width="1" height="7" fill="#f55"/><rect x="11" y="8" width="2" height="1" fill="#9ab"/><rect x="11" y="10" width="2" height="1" fill="#9ab"/><rect x="11" y="12" width="2" height="1" fill="#9ab"/><rect x="12" y="7" width="1" height="7" fill="#abc"/></svg>
<div class="tr" style="left:65px;top:256px;letter-spacing:0.4px;">Crosstab</div>
<div class="tl" style="left:27px;top:280px;width:18px;height:1px;background:#848484"></div>
<svg style="left:45px;top:273px" width="16" height="16" viewBox="0 0 16 16" shape-rendering="crispEdges"><path d="M0.5 13V2.5L1.5 1.5L2.5 0.5H5.5L6.5 1.5L7.5 2.5L8.5 1.5L9.5 0.5H12.5L13.5 1.5L14.5 2.5V13" fill="#fff" stroke="#848484" stroke-width="1.25" shape-rendering="auto"/><rect x="7" y="2" width="1" height="3" fill="#848484"/><rect x="1" y="2" width="1" height="8" fill="#c8c8c8"/><rect x="0" y="10" width="6" height="3" fill="#7a7a7a"/><rect x="5" y="4" width="11" height="9" fill="#8c8c8c"/><path d="M8 2.5L9.5 1H12.5L14 2.5V4H8Z" fill="#fff"/><rect x="6.5" y="6.5" width="7" height="8" fill="#fff" stroke="#000"/><rect x="7" y="8" width="3" height="1" fill="#f00"/><rect x="7" y="10" width="3" height="1" fill="#f00"/><rect x="7" y="12" width="3" height="1" fill="#f00"/><rect x="10" y="7" width="1" height="7" fill="#f00"/><rect x="8" y="7" width="1" height="7" fill="#f55"/><rect x="11" y="8" width="2" height="1" fill="#9ab"/><rect x="11" y="10" width="2" height="1" fill="#9ab"/><rect x="11" y="12" width="2" height="1" fill="#9ab"/><rect x="12" y="7" width="1" height="7" fill="#abc"/></svg>
<div class="tr" style="left:65px;top:273px;letter-spacing:0.31px;">Chi-Square Tests</div>
<div class="tl" style="left:27px;top:297px;width:18px;height:1px;background:#848484"></div>
<svg style="left:45px;top:290px" width="16" height="16" viewBox="0 0 16 16" shape-rendering="crispEdges"><path d="M0.5 13V2.5L1.5 1.5L2.5 0.5H5.5L6.5 1.5L7.5 2.5L8.5 1.5L9.5 0.5H12.5L13.5 1.5L14.5 2.5V13" fill="#fff" stroke="#848484" stroke-width="1.25" shape-rendering="auto"/><rect x="7" y="2" width="1" height="3" fill="#848484"/><rect x="1" y="2" width="1" height="8" fill="#c8c8c8"/><rect x="0" y="10" width="6" height="3" fill="#7a7a7a"/><rect x="5" y="4" width="11" height="9" fill="#8c8c8c"/><path d="M8 2.5L9.5 1H12.5L14 2.5V4H8Z" fill="#fff"/><rect x="6.5" y="6.5" width="7" height="8" fill="#fff" stroke="#000"/><rect x="7" y="8" width="3" height="1" fill="#f00"/><rect x="7" y="10" width="3" height="1" fill="#f00"/><rect x="7" y="12" width="3" height="1" fill="#f00"/><rect x="10" y="7" width="1" height="7" fill="#f00"/><rect x="8" y="7" width="1" height="7" fill="#f55"/><rect x="11" y="8" width="2" height="1" fill="#9ab"/><rect x="11" y="10" width="2" height="1" fill="#9ab"/><rect x="11" y="12" width="2" height="1" fill="#9ab"/><rect x="12" y="7" width="1" height="7" fill="#abc"/></svg>
<div class="tr" style="left:65px;top:290px;letter-spacing:0.2px;">Symmetric Measures</div>

<!--TREE_END-->
<div class="abs" style="left:0;top:612px;width:194px;height:16px;background:#e5e5e9;">
<svg style="left:0;top:0" width="194" height="16" viewBox="0 0 194 16">
<defs><linearGradient id="gTh" x1="0" y1="0" x2="0" y2="1"><stop offset="0" stop-color="#d6e0e0"/><stop offset="1" stop-color="#b6c8c8"/></linearGradient>
<linearGradient id="gBt" x1="0" y1="0" x2="0" y2="1"><stop offset="0" stop-color="#f2f2f6"/><stop offset="1" stop-color="#dcdce0"/></linearGradient></defs>
<rect x="0.500" y="0.500" width="193" height="15" fill="#e5e5e9" stroke="#66808e"/>
<rect x="1" y="1" width="14" height="14" fill="url(#gBt)"/>
<rect x="15" y="0" width="2" height="16" fill="#66808e"/>
<path d="M5.500 8.500L10 4.500V12.500Z" fill="#000"/>
<rect x="52.500" y="0.500" width="126" height="15" fill="url(#gTh)" stroke="#5c7c88"/>
<rect x="53" y="1" width="125" height="1" fill="#e4ecec"/>
<rect x="109" y="4" width="1.500" height="1.500" fill="#6a8a94"/><rect x="113" y="4" width="1.500" height="1.500" fill="#6a8a94"/><rect x="117" y="4" width="1.500" height="1.500" fill="#6a8a94"/><rect x="121" y="4" width="1.500" height="1.500" fill="#6a8a94"/><rect x="111" y="6" width="1.500" height="1.500" fill="#6a8a94"/><rect x="115" y="6" width="1.500" height="1.500" fill="#6a8a94"/><rect x="119" y="6" width="1.500" height="1.500" fill="#6a8a94"/><rect x="109" y="8" width="1.500" height="1.500" fill="#6a8a94"/><rect x="113" y="8" width="1.500" height="1.500" fill="#6a8a94"/><rect x="117" y="8" width="1.500" height="1.500" fill="#6a8a94"/><rect x="121" y="8" width="1.500" height="1.500" fill="#6a8a94"/><rect x="111" y="10" width="1.500" height="1.500" fill="#6a8a94"/><rect x="115" y="10" width="1.500" height="1.500" fill="#6a8a94"/><rect x="119" y="10" width="1.500" height="1.500" fill="#6a8a94"/><rect x="109" y="12" width="1.500" height="1.500" fill="#6a8a94"/><rect x="113" y="12" width="1.500" height="1.500" fill="#6a8a94"/><rect x="117" y="12" width="1.500" height="1.500" fill="#6a8a94"/><rect x="121" y="12" width="1.500" height="1.500" fill="#6a8a94"/>
<rect x="179" y="1" width="14" height="14" fill="url(#gBt)"/>
<path d="M189.500 8.500L185 4.500V12.500Z" fill="#000"/>
</svg>
</div>
</div>
<div id="rightpane" class="abs">

<div class="mono" style="left:26px;top:24px;">CROSSTABS
  /TABLES=VAR00001 BY VAR00002 VAR00003
  /FORMAT=AVALUE TABLES
  /STATISTICS=CHISQ CORR
  /CELLS=COUNT
  /COUNT ROUND CELL.</div>
<svg style="left:8px;top:173px" width="14" height="13" viewBox="0 0 14 13"><path d="M0 4H6V0L13.200 6.500L6 13V9H0Z" fill="#f00"/></svg>
<div class="h1" style="left:26px;top:180px;letter-spacing:0.25px">Crosstabs</div>
<div class="mono" style="left:26px;top:247px;">[DataSet0] D:\thaiall.com\spss\sexandlike.sav</div>
<div class="tt" style="left:22px;top:292px;width:481px;letter-spacing:0.2px">Warnings</div>
<div class="abs" style="left:24px;top:311px;width:477px;height:36px;border:2px solid #000;overflow:hidden;">
<div class="c" style="left:7px;top:2px;line-height:19px;letter-spacing:0.15px">CORR statistics are available for numeric data only.<br>CORR statistics are available for numeric data only.</div>
</div>
<div class="tt" style="left:22px;top:381px;width:547px;letter-spacing:0.05px;">Case Processing Summary</div>
<div class="abs" id="cps" style="left:24px;top:400px;width:543px;height:93px;border:2px solid #000;overflow:hidden;">
<div class="ln" style="left:143px;top:0px;width:2px;height:93px"></div>
<div class="ln" style="left:145px;top:18px;width:398px;height:1px"></div>
<div class="ln" style="left:145px;top:37px;width:398px;height:1px"></div>
<div class="ln" style="left:0px;top:56px;width:543px;height:2px"></div>
<div class="ln" style="left:210px;top:38px;width:1px;height:55px"></div>
<div class="ln" style="left:344px;top:38px;width:1px;height:55px"></div>
<div class="ln" style="left:477px;top:38px;width:1px;height:55px"></div>
<div class="ln" style="left:277px;top:19px;width:1px;height:74px"></div>
<div class="ln" style="left:410px;top:19px;width:1px;height:74px"></div>
<div class="c" style="left:323.7px;top:5px;letter-spacing:0.5px;">Cases</div>
<div class="c" style="left:196px;top:24px;letter-spacing:0.4px;">Valid</div>
<div class="c" style="left:320.8px;top:24px;letter-spacing:0.35px;">Missing</div>
<div class="c" style="left:461.4px;top:24px;letter-spacing:0.4px;">Total</div>
<div class="c" style="left:171px;top:44px;">N</div>
<div class="c" style="left:304.5px;top:44px;">N</div>
<div class="c" style="left:437.4px;top:44px;">N</div>
<div class="c" style="left:221.6px;top:44px;letter-spacing:0.3px;">Percent</div>
<div class="c" style="left:353.8px;top:44px;letter-spacing:0.3px;">Percent</div>
<div class="c" style="left:487.1px;top:44px;letter-spacing:0.3px;">Percent</div>
<div class="c" style="left:6px;top:60px;letter-spacing:0.15px;">VAR00001 * VAR00002</div>
<div class="c" style="left:6px;top:78px;letter-spacing:0.15px;">VAR00001 * VAR00003</div>
<div class="c" style="left:100px;width:100px;text-align:right;top:62px;">10</div>
<div class="c" style="left:167px;width:100px;text-align:right;top:62px;">100.0%</div>
<div class="c" style="left:234px;width:100px;text-align:right;top:62px;">0</div>
<div class="c" style="left:300px;width:100px;text-align:right;top:62px;">.0%</div>
<div class="c" style="left:367px;width:100px;text-align:right;top:62px;">10</div>
<div class="c" style="left:433px;width:100px;text-align:right;top:62px;">100.0%</div>
<div class="c" style="left:100px;width:100px;text-align:right;top:80px;">10</div>
<div class="c" style="left:167px;width:100px;text-align:right;top:80px;">100.0%</div>
<div class="c" style="left:234px;width:100px;text-align:right;top:80px;">0</div>
<div class="c" style="left:300px;width:100px;text-align:right;top:80px;">.0%</div>
<div class="c" style="left:367px;width:100px;text-align:right;top:80px;">10</div>
<div class="c" style="left:433px;width:100px;text-align:right;top:80px;">100.0%</div>
</div>
<div class="h1" style="left:26px;top:546px;letter-spacing:0.6px">VAR00001 *</div>
<div class="tt" style="left:159px;top:596px;">Crosstab</div>
<div class="c" style="left:32.500px;top:622px;letter-spacing:0.1px">Count</div>
<div class="abs" style="left:0;top:630px;width:580px;height:1px;background:#fff"></div>

</div>
<div class="abs" style="left:200px;top:72px;width:1px;height:634px;background:#f6f6fa"></div>
<div id="gap" class="abs"></div>
<div id="status" class="abs"></div>
<div class="abs" style="left:3px;top:709px;width:785px;height:1px;background:#a0a0a0"></div>
<div class="abs" style="left:3px;top:709px;width:1px;height:17px;background:#a0a0a0"></div>
<div class="abs" style="left:0;top:709px;width:3px;height:17px;background:#f2f2f5"></div>
<div class="abs" style="left:0;top:725px;width:788px;height:1px;background:#f2f2f5"></div>
</body>
</html>
